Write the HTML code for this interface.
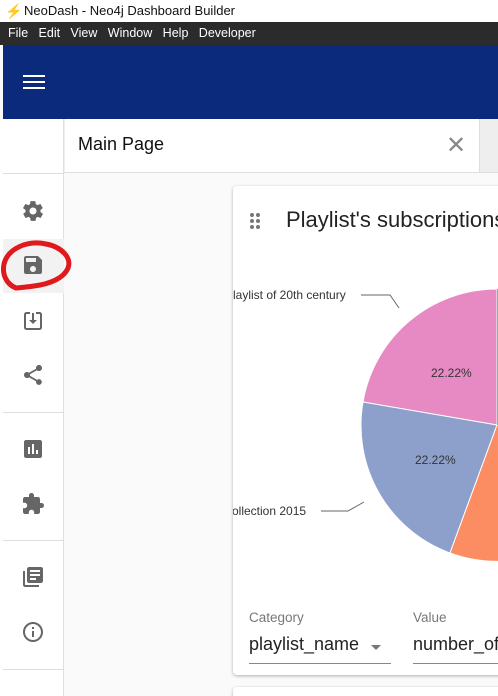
<!DOCTYPE html>
<html><head><meta charset="utf-8"><style>
*{margin:0;padding:0;box-sizing:border-box}
html,body{width:498px;height:696px;overflow:hidden}
body{background:#fafafa;font-family:"Liberation Sans",sans-serif;position:relative}
.abs{position:absolute}
</style></head><body>
<div class="abs" style="left:0;top:0;width:498px;height:22px;background:#fff;font-size:13px;color:#111;line-height:22px;padding-left:24px">NeoDash - Neo4j Dashboard Builder</div>
<div class="abs" style="left:5px;top:3px;color:#f2b21c;font-size:14px;line-height:16px">⚡</div>
<div class="abs" style="left:0;top:22px;width:498px;height:23px;background:#2b2b2b;color:#fff;font-size:12.5px;line-height:23px;padding-left:8px">File&nbsp;&nbsp; Edit&nbsp;&nbsp; View&nbsp;&nbsp; Window&nbsp;&nbsp; Help&nbsp;&nbsp; Developer</div>
<div class="abs" style="left:3px;top:45px;width:495px;height:74px;background:#0b2a7b"></div>
<div class="abs" style="left:23px;top:75px;width:22px;height:2px;background:#fff;box-shadow:0 6px 0 #fff,0 12px 0 #fff"></div>
<div class="abs" style="left:0;top:119px;width:64px;height:577px;background:#fff;border-right:1px solid #e0e0e0"></div>
<div class="abs" style="left:3px;top:173px;width:61px;height:1px;background:#ddd"></div>
<div class="abs" style="left:3px;top:239px;width:61px;height:54px;background:#f2f2f2"></div>
<div class="abs" style="left:3px;top:412px;width:61px;height:1px;background:#ddd"></div>
<div class="abs" style="left:3px;top:540px;width:61px;height:1px;background:#ddd"></div>
<div class="abs" style="left:3px;top:669px;width:61px;height:1px;background:#ddd"></div>
<svg class="abs" style="left:0;top:180px" width="64" height="480" viewBox="0 180 64 480" fill="#666">
<g transform="translate(21,199)"><path d="M19.4 13c.04-.3.1-.7.1-1s-.03-.7-.1-1l2.1-1.6c.2-.2.2-.4.1-.6l-2-3.5c-.1-.2-.4-.3-.6-.2l-2.5 1c-.5-.4-1.1-.7-1.7-1l-.4-2.6c0-.2-.2-.4-.5-.4h-4c-.3 0-.5.2-.5.4l-.4 2.6c-.6.3-1.2.6-1.700 1l-2.5-1c-.2-.1-.5 0-.6.2l-2 3.5c-.1.2-.1.5.1.6L4.6 11c0 .3-.1.7-.1 1s0 .7.1 1l-2.1 1.6c-.2.2-.2.4-.1.6l2 3.5c.1.2.4.3.6.2l2.5-1c.5.4 1.1.7 1.7 1l.4 2.6c0 .2.2.4.5.4h4c.3 0 .5-.2.5-.4l.4-2.6c.6-.3 1.2-.6 1.7-1l2.5 1c.2.1.5 0 .6-.2l2-3.5c.1-.2.1-.5-.1-.6L19.4 13zM12 15.5c-1.9 0-3.5-1.6-3.5-3.5s1.6-3.5 3.5-3.5 3.5 1.6 3.5 3.5-1.6 3.5-3.5 3.5z"/></g>
<g transform="translate(21,253)"><path d="M17 3H5c-1.1 0-2 .9-2 2v14c0 1.1.9 2 2 2h14c1.1 0 2-.9 2-2V7l-4-4zm-5 16c-1.7 0-3-1.3-3-3s1.3-3 3-3 3 1.3 3 3-1.3 3-3 3zm3-10H5V5h10v4z"/></g>
<g transform="translate(21,309)"><path d="M9 4H5.5C4.7 4 4 4.7 4 5.5v13c0 .8.7 1.5 1.5 1.5h13c.8 0 1.5-.7 1.5-1.5v-13C20 4.7 19.3 4 18.5 4H15" fill="none" stroke="#666" stroke-width="2"/><path d="M11 4h2v7h3l-4 4-4-4h3z"/></g>
<g transform="translate(21,363)"><path d="M18 16.1c-.8 0-1.4.3-2 .8l-7.1-4.2c.1-.2.1-.5.1-.7s0-.5-.1-.7L16 7.2c.5.5 1.2.8 2 .8 1.7 0 3-1.3 3-3s-1.3-3-3-3-3 1.3-3 3c0 .2 0 .5.1.7L8 9.8C7.5 9.3 6.8 9 6 9c-1.7 0-3 1.3-3 3s1.3 3 3 3c.8 0 1.5-.3 2-.8l7.1 4.2c-.1.2-.1.4-.1.6 0 1.6 1.3 2.9 2.9 2.9s2.900-1.3 2.9-2.9-1.2-2.9-2.8-2.9z"/></g>
<g transform="translate(21,437)"><path d="M19 3H5c-1.1 0-2 .9-2 2v14c0 1.1.9 2 2 2h14c1.1 0 2-.9 2-2V5c0-1.1-.9-2-2-2zM9 17H7v-7h2v7zm4 0h-2V7h2v10zm4 0h-2v-4h2v4z"/></g>
<g transform="translate(21,492)"><path d="M20.5 11H19V7c0-1.1-.9-2-2-2h-4V3.5C13 2.1 11.9 1 10.5 1S8 2.1 8 3.5V5H4c-1.1 0-2 .9-2 2v3.8h1.5c1.5 0 2.7 1.2 2.7 2.7S5 16.2 3.5 16.2H2V20c0 1.1.9 2 2 2h3.8v-1.5c0-1.5 1.2-2.7 2.7-2.7s2.7 1.2 2.7 2.7V22H17c1.1 0 2-.9 2-2v-4h1.5c1.4 0 2.5-1.1 2.5-2.5S21.9 11 20.5 11z"/></g>
<g transform="translate(21,565)"><path d="M4 6H2v14c0 1.1.9 2 2 2h14v-2H4V6zm16-4H8c-1.1 0-2 .9-2 2v12c0 1.1.9 2 2 2h12c1.1 0 2-.9 2-2V4c0-1.1-.9-2-2-2zm-1 9H9V9h10v2zm-4 4H9v-2h6v2zm4-8H9V5h10v2z"/></g>
<g transform="translate(21,620)"><path d="M11 7h2v2h-2zm0 4h2v6h-2zm1-9C6.5 2 2 6.5 2 12s4.5 10 10 10 10-4.5 10-10S17.5 2 12 2zm0 18c-4.4 0-8-3.6-8-8s3.6-8 8-8 8 3.6 8 8-3.6 8-8 8z"/></g>
</svg>
<svg class="abs" style="left:0;top:230px" width="80" height="70"><path d="M16 58 C6 54 2 44 4 34 C8 18 28 10 46 14 C62 17 72 28 68 38 C64 48 50 54 34 56 C26 57 20 58 16 58" fill="none" stroke="#e0191d" stroke-width="5" stroke-linecap="round"/></svg>
<div class="abs" style="left:64px;top:119px;width:434px;height:54px;background:#eee;border-bottom:1px solid #ddd"></div>
<div class="abs" style="left:65px;top:119px;width:415px;height:53px;background:#fff;border-right:1px solid #ddd;font-size:18px;color:#111;line-height:50px;padding-left:13px">Main Page</div>
<div class="abs" style="left:446px;top:134px;font-size:24px;color:#888;line-height:24px;font-weight:300">✕</div>
<div class="abs" style="left:233px;top:186px;width:280px;height:489px;background:#fff;border-radius:4px;box-shadow:0 1px 3px rgba(0,0,0,.3)"></div>
<div class="abs" style="left:233px;top:687px;width:280px;height:20px;background:#fff;border-radius:4px;box-shadow:0 1px 3px rgba(0,0,0,.3)"></div>
<svg class="abs" style="left:248px;top:212px" width="16" height="18" fill="#777"><circle cx="4" cy="3" r="2"/><circle cx="10" cy="3" r="2"/><circle cx="4" cy="9" r="2"/><circle cx="10" cy="9" r="2"/><circle cx="4" cy="15" r="2"/><circle cx="10" cy="15" r="2"/></svg>
<div class="abs" style="left:286px;top:207px;font-size:22px;color:#222;white-space:nowrap">Playlist's subscriptions</div>
<div class="abs" style="left:233px;top:280px;width:265px;height:300px;overflow:hidden">
<svg width="265" height="300" style="display:block">
<g transform="translate(264,145)">
<path d="M0 0 L0 -136 A136 136 0 0 0 -134 -23 Z" fill="#e78ac3" stroke="#fff" stroke-width="1"/>
<path d="M0 0 L-134 -23 A136 136 0 0 0 -47 128 Z" fill="#8da0cb" stroke="#fff" stroke-width="1"/>
<path d="M0 0 L-47 128 A136 136 0 0 0 10 136 L10 0 Z" fill="#fc8d62" stroke="#fff" stroke-width="1"/>
<path d="M0 0 L0 -136 L2 -136 L2 0Z" fill="#66c2a5"/>
</g>
<text x="198" y="97" font-size="12" fill="#333" font-family="Liberation Sans">22.22%</text>
<text x="182" y="184" font-size="12" fill="#333" font-family="Liberation Sans">22.22%</text>
<polyline points="128,15 157,15 166,28" fill="none" stroke="#666"/>
<polyline points="88,231 115,231 131,222" fill="none" stroke="#666"/>
<text x="-8" y="19" font-size="12" fill="#333" font-family="Liberation Sans">Playlist of 20th century</text>
<text x="-7" y="235" font-size="12" fill="#333" font-family="Liberation Sans">collection 2015</text>
</svg></div>
<div class="abs" style="left:249px;top:610px;font-size:13.5px;color:#777">Category</div>
<div class="abs" style="left:413px;top:610px;font-size:13.5px;color:#777">Value</div>
<div class="abs" style="left:249px;top:634px;font-size:18px;color:#222">playlist_name</div>
<div class="abs" style="left:371px;top:645px;width:0;height:0;border-left:5px solid transparent;border-right:5px solid transparent;border-top:5px solid #777"></div>
<div class="abs" style="left:413px;top:634px;font-size:18px;color:#222;white-space:nowrap">number_of</div>
<div class="abs" style="left:249px;top:663px;width:142px;height:1px;background:#888"></div>
<div class="abs" style="left:413px;top:663px;width:90px;height:1px;background:#888"></div>
</body></html>
